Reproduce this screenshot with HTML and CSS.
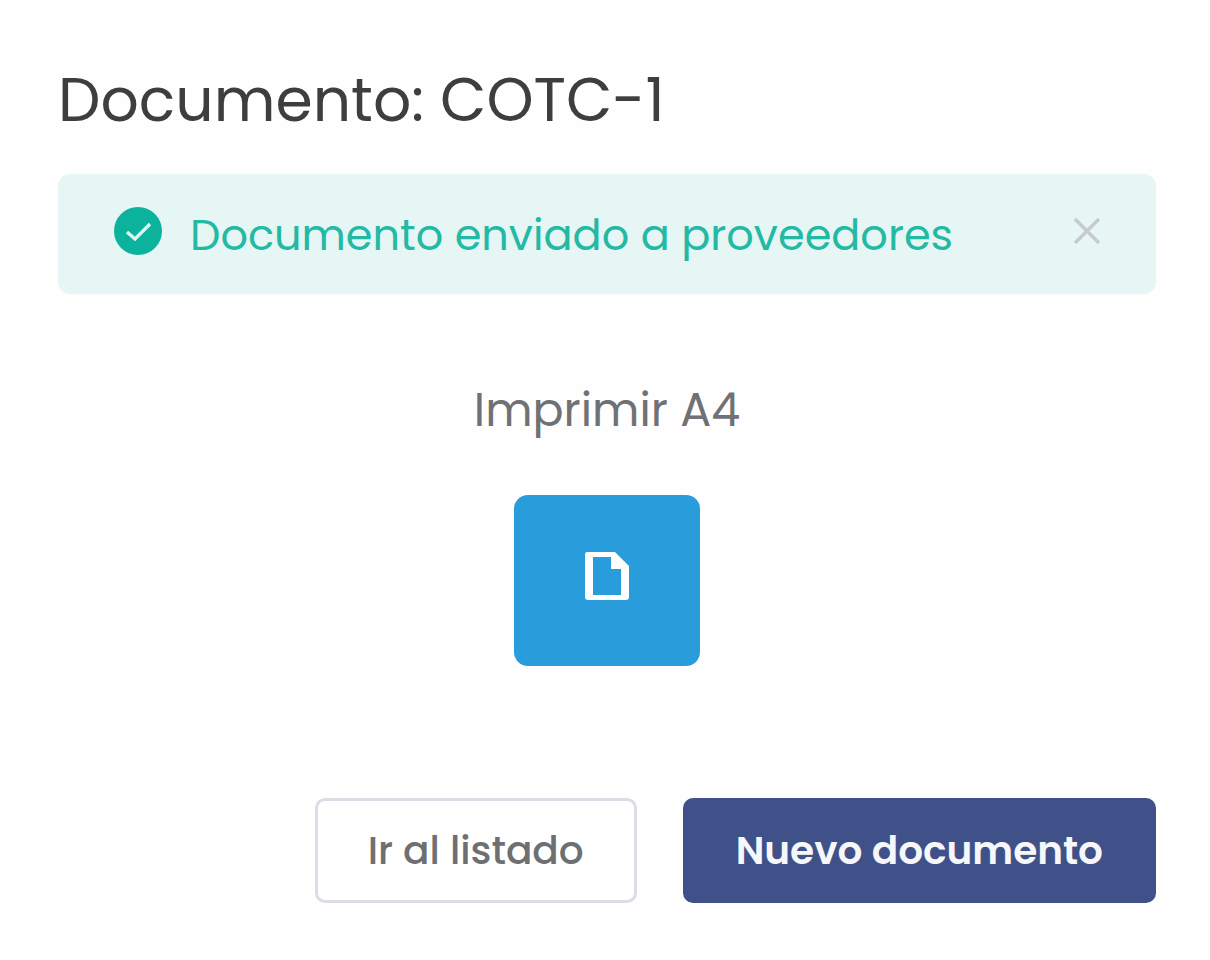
FILE: index.html
```html
<!DOCTYPE html>
<html lang="es">
<head>
<meta charset="utf-8">
<meta name="viewport" content="width=device-width, initial-scale=1">
<title>Documento: COTC-1</title>
<link rel="stylesheet" href="styles.css">
</head>
<body>
<main class="dialog">
  <h1 class="dialog-title">Documento: COTC-1</h1>
  <div class="alert" role="status">
    <svg class="alert-icon" viewBox="0 0 48 50" aria-hidden="true"><circle cx="24" cy="25" r="24" fill="#0bb39c"/><path d="M13 26l8 7 15-15" fill="none" stroke="#dff5f1" stroke-width="3.4"/></svg>
    <p class="alert-text">Documento enviado a proveedores</p>
    <button class="alert-close" type="button" aria-label="Cerrar"><svg viewBox="0 0 26 26" aria-hidden="true"><path d="M1 1l24 24M25 1L1 25" fill="none" stroke="#c5cbd1" stroke-width="3.5"/></svg></button>
  </div>
  <section class="print">
    <h2 class="print-title">Imprimir A4</h2>
    <button class="print-button" type="button" aria-label="Imprimir A4"><svg viewBox="0 0 46 50" aria-hidden="true"><path fill="#fff" fill-rule="evenodd" d="M3 1h28l14 14v31q0 3-3 3H4q-3 0-3-3V4q0-3 2-3zM9 6v38h28V18H27V6z"/></svg></button>
  </section>
  <footer class="actions">
    <button class="button button-plain" type="button">Ir al listado</button>
    <button class="button button-primary" type="button">Nuevo documento</button>
  </footer>
</main>
</body>
</html>
```
FILE: styles.css
```css
* {
  box-sizing: border-box;
}

body {
  margin: 0;
  background: #fefefe;
  font-family: Poppins, Lato, sans-serif;
}

.dialog {
  padding: 64px 54px 56px 58px;
}

.dialog-title {
  margin: 0 0 38px;
  color: #3c3e40;
  font-size: 60px;
  font-weight: 400;
  line-height: 72px;
}

.alert {
  display: flex;
  align-items: flex-start;
  min-height: 120px;
  padding: 32px 56px 28px;
  border-radius: 12px;
  background: #e6f6f4;
}

.alert-icon {
  width: 48px;
  height: 50px;
  margin-right: 28px;
}

.alert-text {
  flex: 1;
  margin: 0;
  color: #23b9a4;
  font-size: 43px;
  line-height: 58px;
}

.alert-close {
  display: flex;
  align-items: center;
  height: 50px;
  padding: 0;
  border: 0;
  background: none;
}

.alert-close svg {
  width: 26px;
  height: 26px;
}

.print {
  display: flex;
  flex-direction: column;
  align-items: center;
  padding: 86px 0 132px;
}

.print-title {
  margin: 0 0 55px;
  color: #6f7174;
  font-size: 46px;
  font-weight: 400;
  line-height: 60px;
}

.print-button {
  display: flex;
  align-items: center;
  justify-content: center;
  width: 186px;
  height: 171px;
  padding: 0 0 10px;
  border: 0;
  border-radius: 14px;
  background: #299cdb;
}

.print-button svg {
  width: 46px;
  height: 50px;
}

.actions {
  display: flex;
  justify-content: flex-end;
  gap: 46px;
}

.button {
  height: 105px;
  padding: 0 50px;
  border: 3px solid #dadde6;
  border-radius: 10px;
  font-family: inherit;
  font-size: 39px;
  font-weight: 500;
}

.button-plain {
  background: #fff;
  color: #6e6f72;
}

.button-primary {
  border-color: #405189;
  background: #405189;
  color: #f6f7fb;
  font-weight: 600;
}
```
